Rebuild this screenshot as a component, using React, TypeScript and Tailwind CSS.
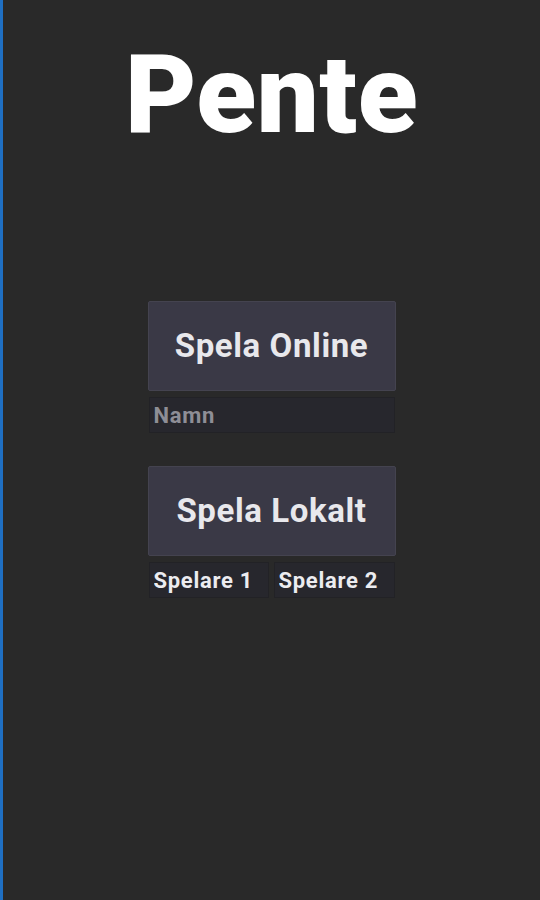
import React from "react";

export default function App() {
  const font = { fontFamily: "Roboto, 'Noto Sans', sans-serif" };
  return (
    <div className="w-[540px] h-[900px] bg-[#292929] flex" style={font}>
      <div className="w-[3px] h-full bg-[#1f6fc2]" />
      <div className="flex-1 flex flex-col items-center">
        <h1 className="mt-[40px] h-[110px] text-[110px] leading-none font-black text-white tracking-[0.5px]">Pente</h1>
        <div className="mt-[151px] w-[248px] flex flex-col">
          <button className="h-[90px] w-full bg-[#3a3946] border border-[#44434f] rounded-[2px] text-[33px] font-bold tracking-[0.6px] text-[#e8e8ec] flex items-center justify-center">
            Spela Online
          </button>
          <input
            className="mt-[6px] mx-[1px] h-[36px] bg-[#27272d] border border-[#222226] px-[4px] text-[22px] font-bold tracking-[0.7px] text-[#e8e8ec] placeholder:text-[#8e8e96] outline-none"
            placeholder="Namn"
            readOnly
          />
          <button className="mt-[33px] h-[90px] w-full bg-[#3a3946] border border-[#44434f] rounded-[2px] text-[33px] font-bold tracking-[0.6px] text-[#e8e8ec] flex items-center justify-center">
            Spela Lokalt
          </button>
          <div className="mt-[6px] mx-[1px] flex gap-[5px]">
            <input
              className="w-[120px] h-[36px] bg-[#27272d] border border-[#222226] px-[4px] text-[22px] font-bold tracking-[0.7px] text-[#ececf0] outline-none"
              defaultValue="Spelare 1"
              readOnly
            />
            <input
              className="flex-1 min-w-0 h-[36px] bg-[#27272d] border border-[#222226] px-[4px] text-[22px] font-bold tracking-[0.7px] text-[#ececf0] outline-none"
              defaultValue="Spelare 2"
              readOnly
            />
          </div>
        </div>
      </div>
    </div>
  );
}
